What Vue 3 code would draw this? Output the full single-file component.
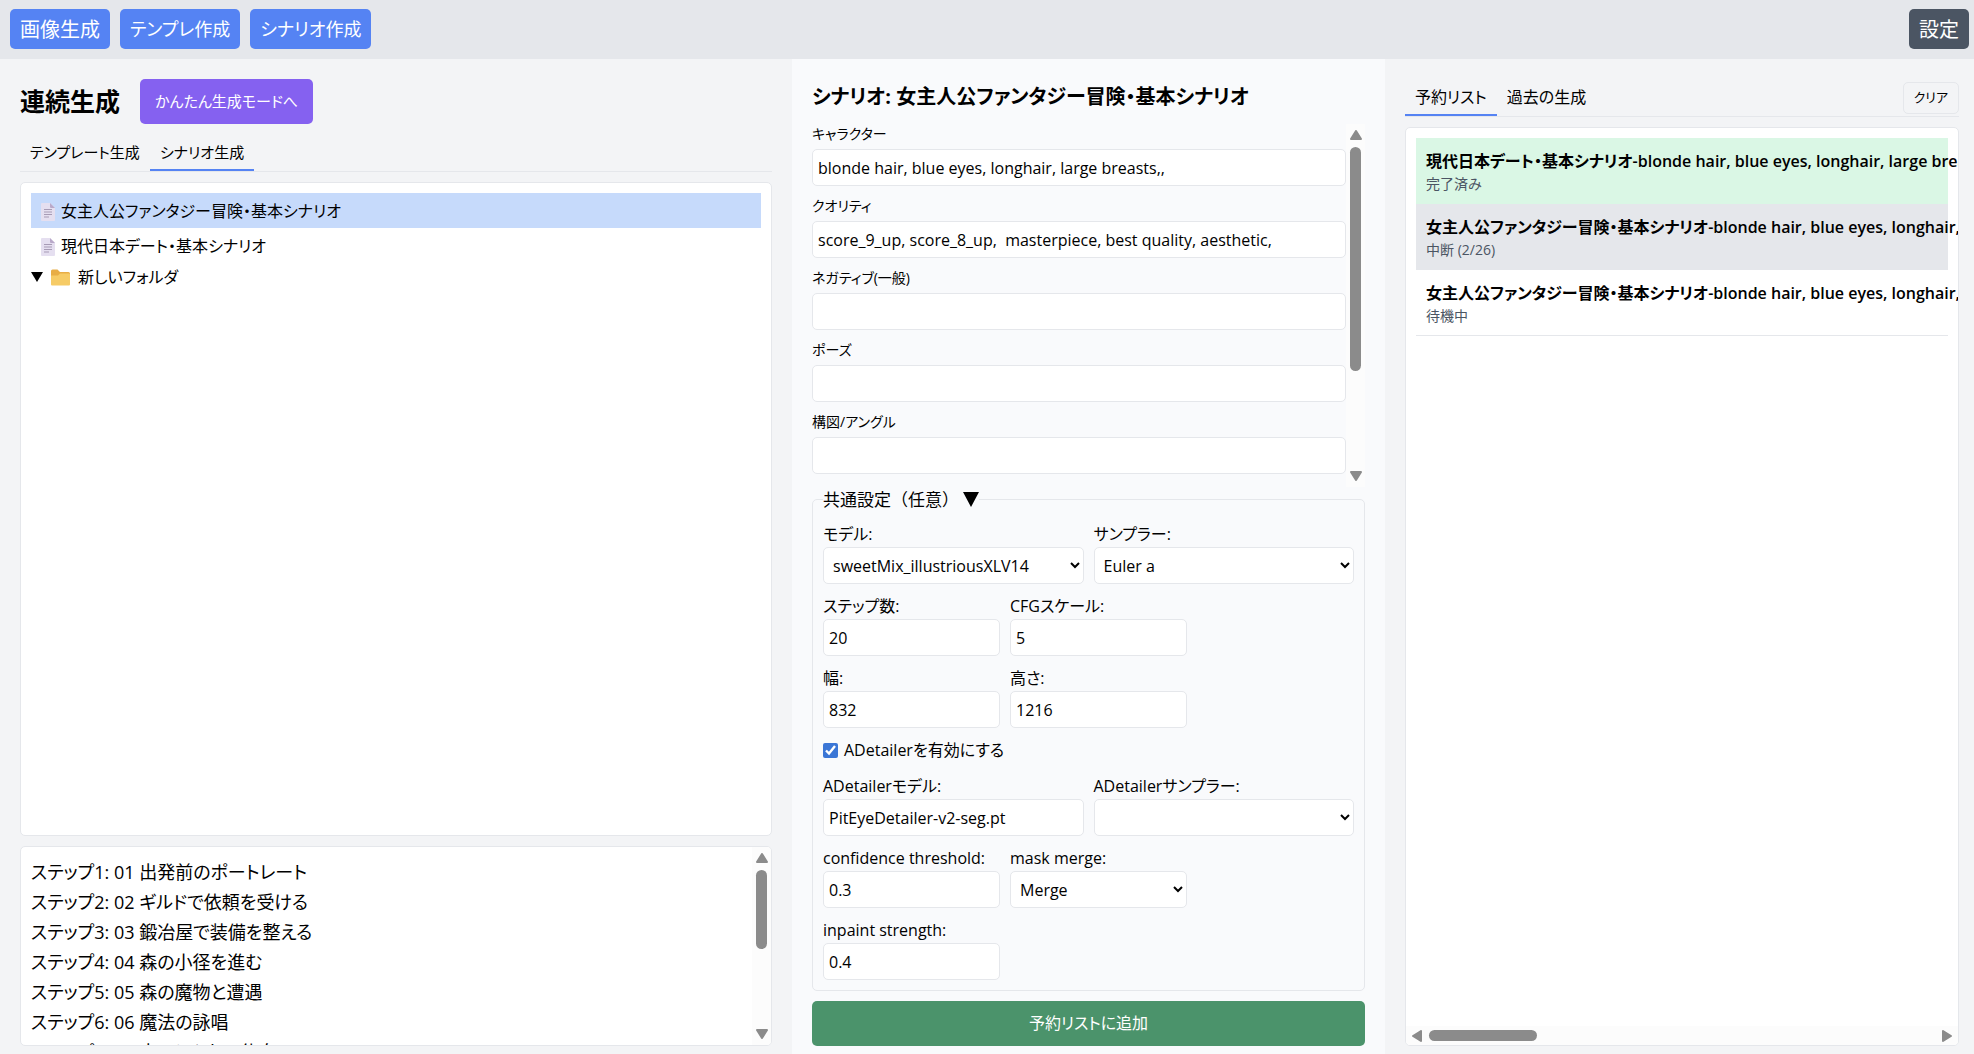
<script setup>
import { ref } from 'vue'

const scenarios = ['女主人公ファンタジー冒険・基本シナリオ', '現代日本デート・基本シナリオ']
const selected = ref(0)

const steps = [
  '01 出発前のポートレート',
  '02 ギルドで依頼を受ける',
  '03 鍛冶屋で装備を整える',
  '04 森の小径を進む',
  '05 森の魔物と遭遇',
  '06 魔法の詠唱',
  '07 水のほとりで休息',
]

const prompts = ref([
  { id: 'character', label: 'キャラクター', value: 'blonde hair, blue eyes, longhair, large breasts,,' },
  { id: 'quality', label: 'クオリティ', value: 'score_9_up, score_8_up,  masterpiece, best quality, aesthetic,' },
  { id: 'negative', label: 'ネガティブ(一般)', value: '' },
  { id: 'pose', label: 'ポーズ', value: '' },
  { id: 'angle', label: '構図/アングル', value: '' },
])

const rows = ref([
  [
    { id: 'model', label: 'モデル:', options: ['sweetMix_illustriousXLV14'], wide: true },
    { id: 'sampler', label: 'サンプラー:', options: ['Euler a'], wide: true },
  ],
  [
    { id: 'stepcount', label: 'ステップ数:', value: '20' },
    { id: 'cfg', label: 'CFGスケール:', value: '5' },
  ],
  [
    { id: 'width', label: '幅:', value: '832' },
    { id: 'height', label: '高さ:', value: '1216' },
  ],
  'adetailer',
  [
    { id: 'admodel', label: 'ADetailerモデル:', value: 'PitEyeDetailer-v2-seg.pt', wide: true },
    { id: 'adsampler', label: 'ADetailerサンプラー:', options: [''], wide: true },
  ],
  [
    { id: 'confidence', label: 'confidence threshold:', value: '0.3' },
    { id: 'merge', label: 'mask merge:', options: ['Merge'] },
  ],
  [{ id: 'inpaint', label: 'inpaint strength:', value: '0.4' }],
])
const adetailer = ref(true)

const queue = [
  { state: 'done', title: '現代日本デート・基本シナリオ-blonde hair, blue eyes, longhair, large breasts,,', status: '完了済み' },
  { state: 'stopped', title: '女主人公ファンタジー冒険・基本シナリオ-blonde hair, blue eyes, longhair, large breasts,,', status: '中断 (2/26)' },
  { state: 'waiting', title: '女主人公ファンタジー冒険・基本シナリオ-blonde hair, blue eyes, longhair, large breasts,,', status: '待機中' },
]
</script>

<template>
  <div class="app">
    <header class="topbar">
      <button class="nav kanji">画像生成</button>
      <button class="nav">テンプレ作成</button>
      <button class="nav">シナリオ作成</button>
      <button class="nav kanji settings">設定</button>
    </header>

    <main class="columns">
      <section class="col left">
        <div class="titlebar">
          <h1>連続生成</h1>
          <button class="mode">かんたん生成モードへ</button>
        </div>
        <nav class="tabs mode-tabs">
          <button class="tab">テンプレート生成</button>
          <button class="tab active">シナリオ生成</button>
        </nav>
        <div class="panel tree">
          <button
            v-for="(s, i) in scenarios"
            :key="s"
            class="leaf"
            :class="{ selected: selected === i }"
            @click="selected = i"
          >
            <svg width="14" height="18" viewBox="0 0 14 18">
              <path d="M1 0h8l5 5v12a1 1 0 0 1-1 1H1a1 1 0 0 1-1-1V1a1 1 0 0 1 1-1z" fill="#e5dff0" />
              <path d="M9 0l5 5H10a1 1 0 0 1-1-1z" fill="#b9a9c9" />
              <path d="M3 6.500h8M3 9h8M3 11.500h8M3 14h5" stroke="#a79bb5" stroke-width="1" />
            </svg>
            <span>{{ s }}</span>
          </button>
          <div class="folder">
            <svg width="12" height="10" viewBox="0 0 12 10"><path d="M0 0h12L6 10z" fill="#000" /></svg>
            <svg width="19" height="17" viewBox="0 0 19 17">
              <path d="M0 2a1.500 1.500 0 0 1 1.500-1.500h5L9 3h8.500A1.500 1.500 0 0 1 19 4.500V10H0z" fill="#e8ad45" />
              <path d="M0 6.500h7L9 4.500h9a1 1 0 0 1 1 1V15.500a1 1 0 0 1-1 1H1a1 1 0 0 1-1-1z" fill="#f6cb66" />
            </svg>
            <span>新しいフォルダ</span>
          </div>
        </div>
        <div class="panel steps">
          <ol>
            <li v-for="(s, i) in steps" :key="s">ステップ{{ i + 1 }}: {{ s }}</li>
          </ol>
          <div class="vbar">
            <svg width="12" height="10" viewBox="0 0 12 10"><path d="M6 1l5 8H1z" class="arrow" /></svg>
            <div class="vtrack"><div class="thumb steps-thumb"></div></div>
            <svg width="12" height="10" viewBox="0 0 12 10"><path d="M6 9l5-8H1z" class="arrow" /></svg>
          </div>
        </div>
      </section>

      <section class="col middle">
        <h2>シナリオ: 女主人公ファンタジー冒険・基本シナリオ</h2>
        <div class="prompts">
          <div class="promptlist">
            <div v-for="p in prompts" :key="p.id" class="prompt">
              <label :for="p.id">{{ p.label }}</label>
              <input :id="p.id" v-model="p.value" type="text" />
            </div>
          </div>
          <div class="vbar">
            <svg width="12" height="10" viewBox="0 0 12 10"><path d="M6 1l5 8H1z" class="arrow" /></svg>
            <div class="vtrack"><div class="thumb prompts-thumb"></div></div>
            <svg width="12" height="10" viewBox="0 0 12 10"><path d="M6 9l5-8H1z" class="arrow" /></svg>
          </div>
        </div>
        <fieldset>
          <legend>
            共通設定（任意）<svg width="16" height="15" viewBox="0 0 16 15"><path d="M0 0h16L8 15z" fill="#000" /></svg>
          </legend>
          <template v-for="(row, r) in rows" :key="r">
            <label v-if="row === 'adetailer'" class="check">
              <input v-model="adetailer" type="checkbox" />ADetailerを有効にする
            </label>
            <div v-else class="row">
              <div v-for="f in row" :key="f.id" class="field" :class="{ wide: f.wide }">
                <label :for="f.id">{{ f.label }}</label>
                <select v-if="f.options" :id="f.id">
                  <option v-for="o in f.options" :key="o">{{ o }}</option>
                </select>
                <input v-else :id="f.id" v-model="f.value" type="text" />
              </div>
            </div>
          </template>
        </fieldset>
        <button class="add">予約リストに追加</button>
      </section>

      <section class="col right">
        <div class="tabs queue-tabs">
          <button class="tab active">予約リスト</button>
          <button class="tab">過去の生成</button>
          <button class="clear">クリア</button>
        </div>
        <div class="panel queue">
          <ul>
            <li v-for="(q, i) in queue" :key="i" :class="q.state">
              <strong>{{ q.title }}</strong>
              <small>{{ q.status }}</small>
            </li>
          </ul>
          <div class="hbar">
            <svg width="10" height="12" viewBox="0 0 10 12"><path d="M1 6l8-5v10z" class="arrow" /></svg>
            <div class="htrack"><div class="thumb queue-thumb"></div></div>
            <svg width="10" height="12" viewBox="0 0 10 12"><path d="M9 6L1 1v10z" class="arrow" /></svg>
          </div>
        </div>
      </section>
    </main>
  </div>
</template>

<style>
body {
  margin: 0;
}
</style>

<style scoped>
* {
  box-sizing: border-box;
}
.app {
  display: flex;
  flex-direction: column;
  height: 100vh;
  overflow: hidden;
  background: #f3f4f6;
  color: #000;
  font: 16px/25px 'Open Sans', 'Noto Sans CJK JP', sans-serif;
  font-feature-settings: 'palt';
}
button,
input,
select {
  font: inherit;
  font-feature-settings: inherit;
  color: inherit;
  margin: 0;
}
button {
  border: 0;
  background: none;
  padding: 0;
  white-space: nowrap;
  cursor: pointer;
}
svg {
  flex: none;
}
.topbar {
  display: flex;
  gap: 10px;
  padding: 9px 5px 10px 10px;
  background: #e5e7eb;
}
.nav {
  height: 40px;
  padding: 0 10px;
  border-radius: 5px;
  background: #5583f3;
  color: #fff;
  font-size: 18px;
}
.nav.kanji {
  font-size: 20px;
}
.nav.settings {
  margin-left: auto;
  background: #4b5563;
}
.columns {
  flex: 1;
  min-height: 0;
  display: grid;
  grid-template-columns: minmax(0, 792fr) minmax(0, 593fr) minmax(0, 589fr);
}
.col {
  display: flex;
  flex-direction: column;
  min-height: 0;
  padding: 20px 20px 8px;
}
.middle {
  background: #f9fafc;
}
.right {
  padding-right: 15px;
}
h1,
h2 {
  margin: 0;
  font-weight: 700;
}
h1 {
  font-size: 25px;
}
h2 {
  font-size: 20px;
  line-height: 35px;
  margin-bottom: 10px;
  white-space: nowrap;
}
.titlebar {
  display: flex;
  align-items: center;
  gap: 20px;
}
.mode {
  height: 45px;
  padding: 0 15px;
  border-radius: 5px;
  background: #8561f0;
  color: #fff;
  font-size: 15px;
}
.tabs {
  display: flex;
  margin-top: 10px;
  height: 38px;
  border-bottom: 1px solid #e5e7eb;
}
.tab {
  padding: 2px 10px 0;
  border-bottom: 2px solid transparent;
}
.mode-tabs {
  font-size: 15px;
}
.tab.active {
  border-bottom-color: #5583f3;
}
.panel {
  margin-top: 10px;
  border: 1px solid #e5e7eb;
  border-radius: 5px;
  background: #fff;
}
.tree {
  flex: 1;
  min-height: 0;
  padding: 10px;
}
.leaf {
  display: flex;
  align-items: center;
  gap: 6px;
  width: 100%;
  height: 35px;
  padding: 2px 10px 0;
}
.selected {
  background: #c6dafb;
}
.folder {
  display: flex;
  align-items: center;
  gap: 8px;
  height: 28px;
}
.steps {
  display: flex;
  height: 200px;
  overflow: hidden;
}
ol,
ul {
  margin: 0;
  padding: 10px;
  list-style: none;
}
.steps ol {
  flex: 1;
  font-size: 18px;
  line-height: 30px;
}
.vbar {
  display: flex;
  flex-direction: column;
  align-items: center;
  width: 19px;
  padding: 6px 0;
  background: #fcfcfc;
}
.vtrack {
  flex: 1;
  padding: 7px 0;
}
.arrow {
  fill: #8b8b8b;
  stroke: #8b8b8b;
  stroke-width: 2;
  stroke-linejoin: round;
}
.thumb {
  border-radius: 6px;
  background: #8b8b8b;
}
.steps-thumb {
  width: 11px;
  height: 79px;
}
.prompts-thumb {
  width: 11px;
  height: 224px;
}
.prompts {
  display: flex;
  flex: 1;
  min-height: 0;
  overflow: hidden;
}
.promptlist {
  flex: 1;
}
.prompt {
  display: flex;
  flex-direction: column;
  gap: 5px;
  margin-bottom: 10px;
}
.prompt label {
  font-size: 14px;
  line-height: 20px;
}
input[type='text'],
select {
  width: 100%;
  height: 37px;
  padding: 1px 5px 0;
  border: 1px solid #e5e7eb;
  border-radius: 5px;
  background: #fff;
}
fieldset {
  min-width: 0;
  margin: 0;
  padding: 10px 10px 0;
  border: 1px solid #e5e7eb;
  border-radius: 5px;
}
legend {
  display: flex;
  align-items: center;
  gap: 4px;
  padding: 0;
  font-size: 17px;
  font-feature-settings: normal;
}
.row {
  display: flex;
  gap: 10px;
  margin-bottom: 10px;
}
.field {
  display: flex;
  flex-direction: column;
  width: 177px;
}
.field.wide {
  flex: 1;
}
.check {
  display: flex;
  align-items: center;
  gap: 6px;
  margin-bottom: 11px;
}
.check input {
  width: 15px;
  height: 15px;
  accent-color: #3b76d6;
}
.add {
  height: 45px;
  margin-top: 10px;
  border-radius: 5px;
  background: #4b936b;
  color: #fff;
  flex: none;
}
.queue-tabs {
  margin-top: 0;
}
.clear {
  align-self: center;
  height: 32px;
  margin-left: auto;
  padding: 0 10px;
  border: 1px solid #e5e7eb;
  border-radius: 5px;
  font-size: 13px;
}
.queue {
  flex: 1;
  min-height: 0;
  display: flex;
  flex-direction: column;
  overflow: hidden;
}
.queue ul {
  flex: 1;
}
.queue li {
  display: flex;
  flex-direction: column;
  height: 66px;
  padding: 11px 10px;
  border-bottom: 1px solid #e5e7eb;
}
.queue strong {
  font-weight: 600;
  white-space: nowrap;
}
.queue small {
  font-size: 14px;
  line-height: 20px;
  color: #4b5563;
}
.queue .done {
  background: #daf7e5;
  border-bottom-color: #daf7e5;
}
.stopped {
  background: #e5e7eb;
}
.hbar {
  display: flex;
  align-items: center;
  height: 19px;
  padding: 0 6px;
  background: #fcfcfc;
}
.htrack {
  flex: 1;
  padding: 0 7px;
}
.queue-thumb {
  width: 108px;
  height: 11px;
}
</style>
